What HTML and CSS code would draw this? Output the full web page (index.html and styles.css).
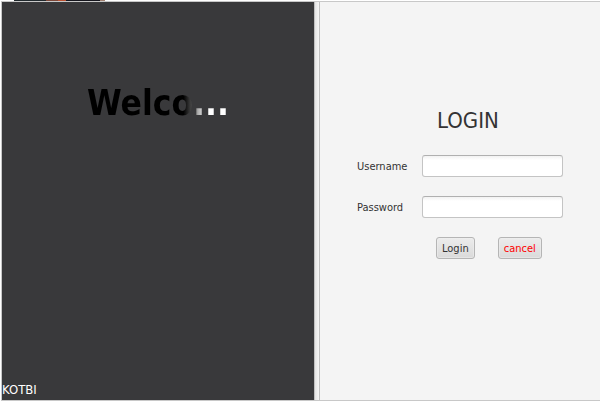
FILE: index.html
```
<!DOCTYPE html>
<html lang="en">
<head>
<meta charset="utf-8">
<title>Login</title>
<link rel="stylesheet" href="styles.css">
</head>
<body>
<div class="backdrop"></div>
<main class="split">
  <section class="welcome">
    <h1 class="welcome-title">Welco...</h1>
    <p class="author">KOTBI</p>
  </section>
  <div class="divider"></div>
  <section class="login">
    <form class="form">
      <h2 class="form-title">LOGIN</h2>
      <label class="label" for="username">Username</label>
      <input class="field" id="username" type="text">
      <label class="label" for="password">Password</label>
      <input class="field" id="password" type="password">
      <div class="actions">
        <button class="button" type="button">Login</button>
        <button class="button button-cancel" type="button">cancel</button>
      </div>
    </form>
  </section>
</main>
</body>
</html>
```
FILE: styles.css
```
* {
  box-sizing: border-box;
}

body {
  display: flex;
  flex-direction: column;
  min-height: 100vh;
  margin: 0;
  background: #fff;
  color: #333;
  font: 11px/14px "DejaVu Sans Condensed", "DejaVu Sans", sans-serif;
}

/* Strip of the window behind, visible above the pane */
.backdrop {
  width: 91px;
  height: 1px;
  margin-left: 14px;
  background: linear-gradient(90deg, #20282c 0 32px, #7a4638 32px 44px, #b85030 44px 52px, #15151c 52px 86px, #a08070 86px);
}

.split {
  flex: 1;
  display: grid;
  grid-template-columns: 313fr 4px 281fr;
  margin-left: 1px;
  border: 1px solid #c8c8c8;
  border-right: 0;
}

.welcome {
  display: flex;
  flex-direction: column;
  align-items: center;
  justify-content: space-between;
  padding-top: 80px;
  background: #39393b;
  border-right: 1px solid #c0c0c0;
}

.welcome-title {
  margin: 0;
  background: linear-gradient(90deg, #000 68%, #666 76%, #aaa 78%, #fff 84%);
  background-clip: text;
  -webkit-background-clip: text;
  color: transparent;
  font-size: 35px;
  line-height: 42px;
}

.author {
  align-self: flex-start;
  margin: 0;
  color: #fff;
  font-size: 13px;
  line-height: 20px;
}

.divider {
  background: linear-gradient(90deg, #e4e4e4, #f6f6f6);
}

.login {
  background: #f4f4f4;
  border-left: 1px solid #c0c0c0;
  padding: 104px 37px 0;
}

.form {
  display: grid;
  grid-template-columns: 65px 1fr;
  row-gap: 19px;
  align-items: center;
}

.form-title {
  grid-column: 1 / -1;
  margin: 0 0 0 80px;
  font-size: 22px;
  font-weight: 400;
  line-height: 30px;
}

.label {
  padding-top: 2px;
}

.field {
  width: 100%;
  height: 22px;
  padding: 2px 6px;
  border: 1px solid #c4c4c4;
  border-top-color: #b0b0b0;
  border-radius: 3px;
  background: linear-gradient(#f2f2f2, #fff 4px);
  font: inherit;
}

.actions {
  grid-column: 1 / -1;
  display: flex;
  gap: 23px;
  margin-left: 79px;
}

.button {
  height: 22px;
  padding: 1px 5px 0;
  border: 1px solid #b5b5b5;
  border-radius: 3px;
  background: linear-gradient(#ececec, #dadada);
  box-shadow: inset 0 0 0 1px #f0f0f080;
  color: #333;
  font: inherit;
}

.button-cancel {
  color: #f00;
}
```
